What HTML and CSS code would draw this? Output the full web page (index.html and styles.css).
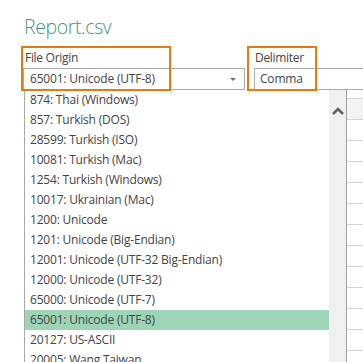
FILE: index.html
```html
<!DOCTYPE html>
<html lang="en">
<head>
    <meta charset="UTF-8">
    <meta name="viewport" content="width=device-width, initial-scale=1.0">
    <title>Report.csv</title>
    <link rel="stylesheet" href="styles.css">
</head>
<body>
    <h1 class="title">Report.csv</h1>

    <div class="fields">
        <div class="field origin">
            <label class="field-label">File Origin</label>
            <div class="select">
                <span>65001: Unicode (UTF-8)</span>
                <span class="caret"></span>
            </div>
            <span class="mark"></span>
        </div>
        <div class="field delim">
            <label class="field-label">Delimiter</label>
            <div class="input">Comma</div>
            <span class="mark"></span>
        </div>
    </div>

    <div class="main">
        <div class="dropdown">
            <ul class="options">
                <li>874: Thai (Windows)</li>
                <li>857: Turkish (DOS)</li>
                <li>28599: Turkish (ISO)</li>
                <li>10081: Turkish (Mac)</li>
                <li>1254: Turkish (Windows)</li>
                <li>10017: Ukrainian (Mac)</li>
                <li>1200: Unicode</li>
                <li>1201: Unicode (Big-Endian)</li>
                <li>12001: Unicode (UTF-32 Big-Endian)</li>
                <li>12000: Unicode (UTF-32)</li>
                <li>65000: Unicode (UTF-7)</li>
                <li class="selected">65001: Unicode (UTF-8)</li>
                <li>20127: US-ASCII</li>
                <li>20005: Wang Taiwan</li>
            </ul>
            <div class="scrollbar">
                <svg class="scroll-up" width="12" height="8" viewBox="0 0 12 8">
                    <path d="M1 7 L6 2 L11 7" fill="none" stroke="#606060" stroke-width="2.6"/>
                </svg>
            </div>
        </div>
        <!-- preview table behind the list -->
        <div class="grid">
            <div class="grid-top"></div>
            <div class="grid-head"></div>
            <div class="grid-row"></div>
            <div class="grid-row"></div>
            <div class="grid-row"></div>
            <div class="grid-row"></div>
            <div class="grid-row"></div>
            <div class="grid-row"></div>
            <div class="grid-row"></div>
            <div class="grid-row"></div>
            <div class="grid-row"></div>
            <div class="grid-row"></div>
            <div class="grid-row"></div>
        </div>
    </div>
</body>
</html>
```

FILE: styles.css
```css
body {
    font-family: "Open Sans", "Noto Sans", sans-serif;
    margin: 0;
    padding: 0;
    background-color: #fff;
    color: #444;
    overflow: hidden;
    height: 362px;
}

.title {
    margin: 0;
    padding: 14px 0 0 24px;
    height: 33px;
    font-size: 19.5px;
    font-weight: 300;
    letter-spacing: -0.4px;
    line-height: 26px;
    color: #46967c;
}

.fields {
    display: flex;
    gap: 9px;
    padding-left: 23px;
}

.field {
    position: relative;
    display: flex;
    flex-direction: column;
}

.origin {
    width: 222px;
}

.delim {
    flex: 1;
}

.field-label {
    font-size: 12px;
    letter-spacing: -0.3px;
    line-height: 21px;
    padding-left: 2px;
    color: #444;
}

.delim .field-label {
    padding-left: 1px;
}

.select,
.input {
    height: 20px;
    border: 1px solid #ababab;
    font-size: 12px;
    letter-spacing: -0.2px;
    line-height: 20px;
    display: flex;
    align-items: center;
}

.select {
    padding: 0 8px 0 6px;
    justify-content: space-between;
}

.input {
    border-right: none;
    padding-left: 5px;
}

.caret {
    width: 0;
    height: 0;
    border-left: 3px solid transparent;
    border-right: 3px solid transparent;
    border-top: 3px solid #707070;
}

/* orange highlight boxes drawn over the fields */
.mark {
    position: absolute;
    top: -1px;
    height: 41px;
    border: 2px solid #e47a10;
    pointer-events: none;
}

.origin .mark {
    left: -2px;
    width: 146px;
}

.delim .mark {
    left: -7px;
    width: 66px;
}

.main {
    display: flex;
    align-items: flex-start;
}

.dropdown {
    display: flex;
    margin-left: 24px;
    width: 321px;
    height: 272px;
    border-left: 1px solid #a8a8a8;
    border-right: 1px solid #a0a0a0;
}

.options {
    list-style: none;
    margin: 0;
    padding: 0;
    flex: 1;
}

.options li {
    height: 20px;
    line-height: 20px;
    font-size: 12px;
    letter-spacing: -0.2px;
    padding-left: 5px;
    white-space: nowrap;
}

.options li.selected {
    background-color: #9fd5b7;
}

.scrollbar {
    width: 17px;
    background-color: #f0f0f0;
    display: flex;
    justify-content: center;
    padding-top: 17px;
    box-sizing: border-box;
}

.scroll-up {
    display: block;
}

.grid {
    flex: 1;
    display: flex;
    flex-direction: column;
}

.grid-top {
    height: 8px;
    border-bottom: 1px solid #d4d4d4;
}

.grid-head {
    height: 20px;
    background-color: #f3f3f3;
    border-bottom: 1px solid #d4d4d4;
}

.grid-row {
    height: 20px;
    border-bottom: 1px solid #d4d4d4;
}
```
